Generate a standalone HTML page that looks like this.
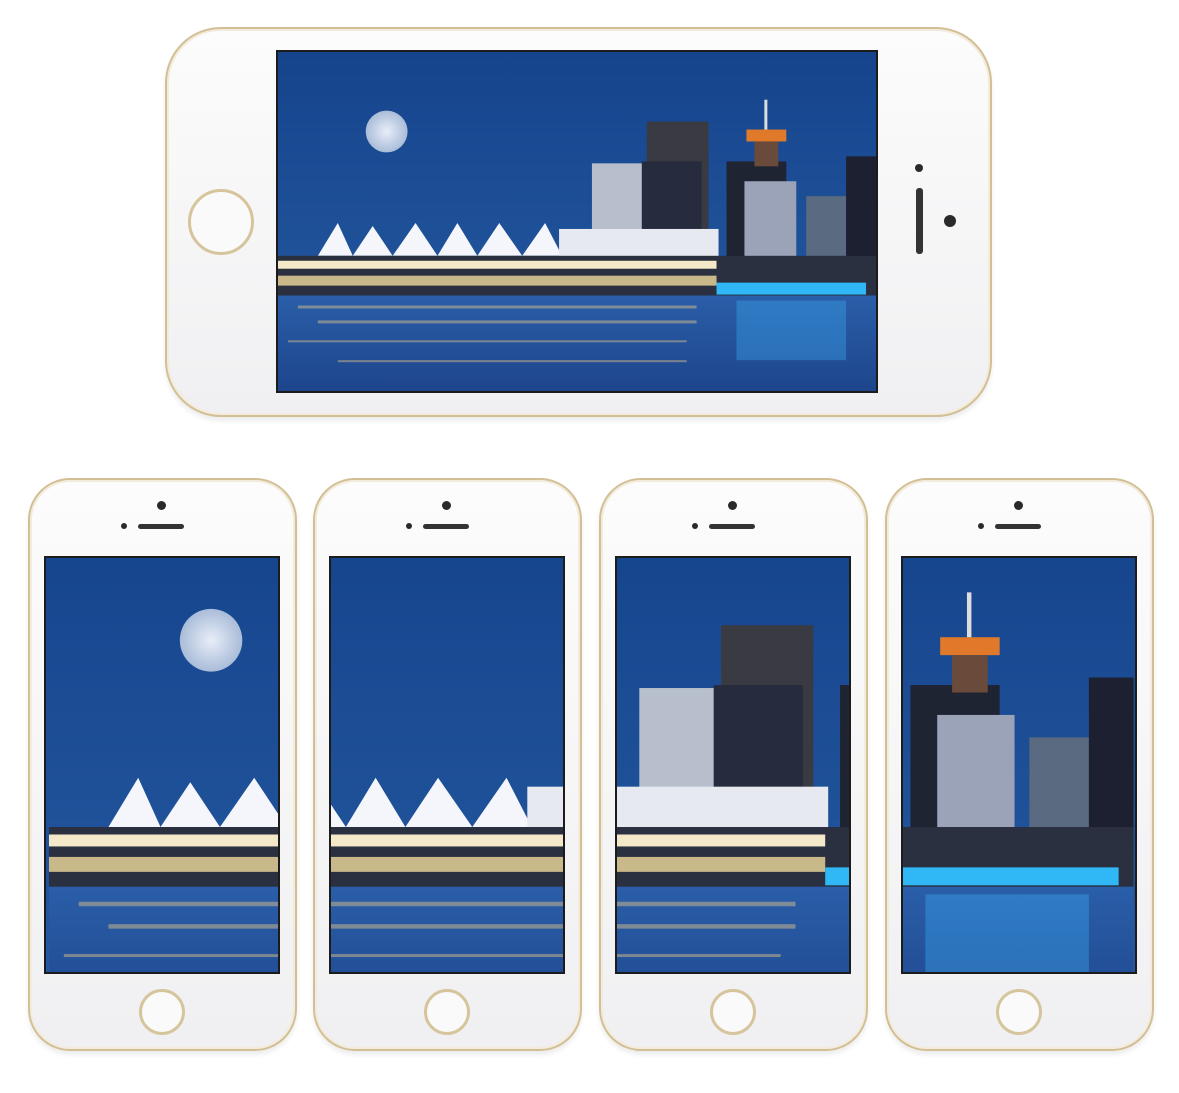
<!DOCTYPE html>
<html><head><meta charset="utf-8"><style>
html,body{margin:0;padding:0;background:#fff;width:1179px;height:1093px;overflow:hidden;position:relative;font-family:"Liberation Sans",sans-serif}
.ph{position:absolute;box-sizing:border-box;background:linear-gradient(180deg,#fcfcfc,#f0f0f2);border:2px solid #d3bf95;box-shadow:inset 0 0 0 2px #f3ecdc,0 4px 5px rgba(0,0,0,.07)}
.scr{position:absolute;box-sizing:border-box;background:#111;border:2px solid #1c1c1c;overflow:hidden}
.scr svg{display:block;width:100%;height:100%}
.hb{position:absolute;box-sizing:border-box;border-radius:50%;border:3px solid #d6c49c;background:#fafafa}
.dot{position:absolute;border-radius:50%;background:#2a2a2a}
.spk{position:absolute;background:#333;border-radius:3px}
</style></head><body>
<svg width="0" height="0" style="position:absolute;left:0;top:0">
<defs>
<linearGradient id="sky" x1="0" y1="0" x2="0" y2="1"><stop offset="0" stop-color="#103d86"/><stop offset="1" stop-color="#2c63aa"/></linearGradient>
<linearGradient id="wat" x1="0" y1="0" x2="0" y2="1"><stop offset="0" stop-color="#2a5ea8"/><stop offset="1" stop-color="#1a3f85"/></linearGradient>
<radialGradient id="moon"><stop offset="0" stop-color="#e8eef8"/><stop offset="1" stop-color="#a9bcd8"/></radialGradient>
<g id="pano">
<rect x="-200" y="-100" width="1000" height="560" fill="url(#sky)"/>
<circle cx="109" cy="80" r="21" fill="url(#moon)"/>
<rect x="370" y="70" width="62" height="140" fill="#3a3a42"/>
<rect x="315" y="112" width="60" height="100" fill="#b8bfcc"/>
<rect x="365" y="110" width="60" height="100" fill="#262c3e"/>
<rect x="450" y="110" width="60" height="130" fill="#1f2433"/>
<rect x="468" y="130" width="52" height="110" fill="#9aa3b8"/>
<rect x="470" y="78" width="40" height="12" fill="#e07a2a"/>
<rect x="478" y="90" width="24" height="25" fill="#6a4a3a"/>
<rect x="488" y="48" width="3" height="30" fill="#ddd"/>
<rect x="530" y="145" width="40" height="80" fill="#5a6a80"/>
<rect x="570" y="105" width="30" height="125" fill="#1c2030"/>
<path d="M40 205 L60 172 L75 205 L95 175 L115 205 L138 172 L160 205 L180 172 L200 205 L222 172 L245 205 L268 172 L285 205 Z" fill="#f4f6fb"/>
<rect x="282" y="178" width="160" height="40" fill="#e6e9f0"/>
<rect x="0" y="205" width="600" height="40" fill="#2a3040"/>
<rect x="0" y="210" width="440" height="8" fill="#f3e9c8"/>
<rect x="0" y="225" width="440" height="10" fill="#c9b98a"/>
<rect x="440" y="232" width="150" height="12" fill="#2fb8f5"/>
<rect x="0" y="245" width="600" height="120" fill="url(#wat)"/>
<g fill="#e8c888" opacity=".45">
<rect x="20" y="255" width="400" height="3"/><rect x="40" y="270" width="380" height="3"/><rect x="10" y="290" width="400" height="2"/><rect x="60" y="310" width="350" height="2"/>
</g>
<rect x="460" y="250" width="110" height="60" fill="#3aa8f0" opacity=".4"/>
</g>
</defs></svg>

<div class="ph" style="left:165px;top:27px;width:827px;height:390px;border-radius:56px"></div>
<div class="scr" style="left:276px;top:50px;width:602px;height:343px"><svg viewBox="0 0 600 341" preserveAspectRatio="none"><use href="#pano"/></svg></div>
<div class="hb" style="left:188px;top:189px;width:66px;height:66px"></div>
<div class="dot" style="left:915px;top:164px;width:8px;height:8px"></div>
<div class="spk" style="left:916px;top:188px;width:7px;height:66px"></div>
<div class="dot" style="left:944px;top:215px;width:12px;height:12px"></div>

<div class="ph" style="left:28px;top:478px;width:269px;height:573px;border-radius:42px"></div>
<div class="scr" style="left:44px;top:556px;width:236px;height:418px"><svg viewBox="-2 25 156 277" preserveAspectRatio="none"><use href="#pano"/></svg></div>
<div class="hb" style="left:139px;top:989px;width:46px;height:46px"></div>
<div class="dot" style="left:157px;top:501px;width:9px;height:9px"></div>
<div class="dot" style="left:121px;top:523px;width:6px;height:6px"></div>
<div class="spk" style="left:138px;top:524px;width:46px;height:5px"></div>

<div class="ph" style="left:313px;top:478px;width:269px;height:573px;border-radius:42px"></div>
<div class="scr" style="left:329px;top:556px;width:236px;height:418px"><svg viewBox="150 25 156 277" preserveAspectRatio="none"><use href="#pano"/></svg></div>
<div class="hb" style="left:424px;top:989px;width:46px;height:46px"></div>
<div class="dot" style="left:442px;top:501px;width:9px;height:9px"></div>
<div class="dot" style="left:406px;top:523px;width:6px;height:6px"></div>
<div class="spk" style="left:423px;top:524px;width:46px;height:5px"></div>

<div class="ph" style="left:599px;top:478px;width:269px;height:573px;border-radius:42px"></div>
<div class="scr" style="left:615px;top:556px;width:236px;height:418px"><svg viewBox="300 25 156 277" preserveAspectRatio="none"><use href="#pano"/></svg></div>
<div class="hb" style="left:710px;top:989px;width:46px;height:46px"></div>
<div class="dot" style="left:728px;top:501px;width:9px;height:9px"></div>
<div class="dot" style="left:692px;top:523px;width:6px;height:6px"></div>
<div class="spk" style="left:709px;top:524px;width:46px;height:5px"></div>

<div class="ph" style="left:885px;top:478px;width:269px;height:573px;border-radius:42px"></div>
<div class="scr" style="left:901px;top:556px;width:236px;height:418px"><svg viewBox="445 25 156 277" preserveAspectRatio="none"><use href="#pano"/></svg></div>
<div class="hb" style="left:996px;top:989px;width:46px;height:46px"></div>
<div class="dot" style="left:1014px;top:501px;width:9px;height:9px"></div>
<div class="dot" style="left:978px;top:523px;width:6px;height:6px"></div>
<div class="spk" style="left:995px;top:524px;width:46px;height:5px"></div>
</body></html>
